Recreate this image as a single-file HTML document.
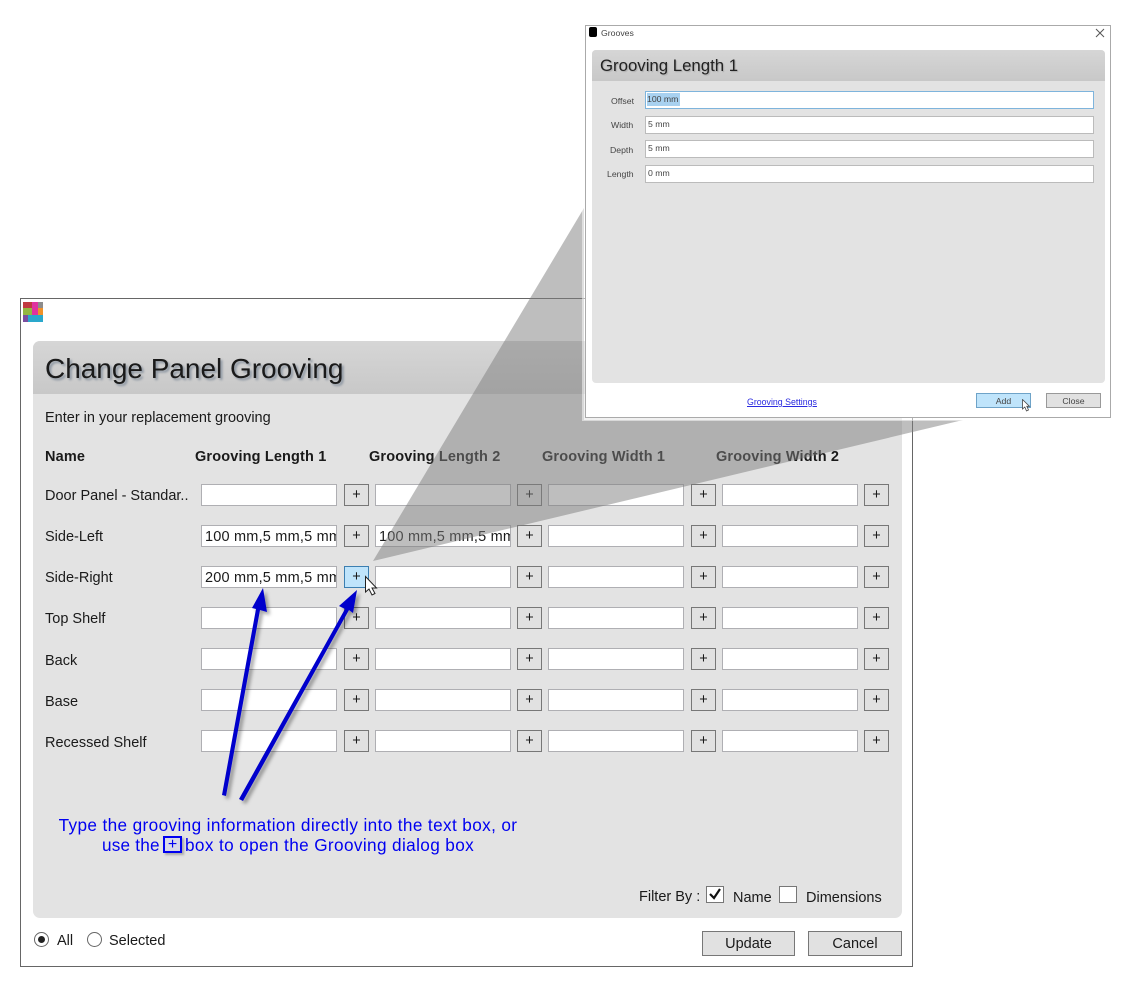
<!DOCTYPE html>
<html><head><meta charset="utf-8"><style>
html,body{margin:0;padding:0;background:#fff}
body{width:1133px;height:987px;position:relative;overflow:hidden;font-family:"Liberation Sans",sans-serif;color:#1a1a1a}
div,span{position:absolute;box-sizing:border-box;white-space:nowrap}
.i{background:#fff;border:1px solid #afafb3;width:136px;height:22px;font-size:14.5px;line-height:22px;padding-left:3px;overflow:hidden;letter-spacing:.2px}
.b{background:#e1e1e1;border:1px solid #777;width:25px;height:22px;font-size:14.5px;line-height:21px;text-align:center}
.l{left:45px;font-size:14.5px}
.h{top:448px;font-size:14.5px;font-weight:bold;letter-spacing:.15px;line-height:18px}
.s{font-size:8.7px;color:#444}
.g{left:645px;width:449px;height:18px;background:#fff;border:1px solid #bbb;font-size:8.7px;line-height:14px;padding-left:2px;color:#444}
.t{color:#0000f0;font-size:17.2px;line-height:20px;letter-spacing:.37px}
</style></head><body>
<div style="left:20px;top:298px;width:893px;height:669px;border:1px solid #666"></div>
<svg style="position:absolute;left:23px;top:302px" width="20" height="20"><rect x="0" y="0" width="9" height="6" fill="#c0393f"/><rect x="9" y="0" width="6" height="13" fill="#e0339f"/><rect x="15" y="0" width="5" height="6" fill="#8c8c8c"/><rect x="0" y="6" width="9" height="7" fill="#93b840"/><rect x="15" y="6" width="5" height="7" fill="#f0922a"/><rect x="0" y="13" width="5" height="7" fill="#7a4fa0"/><rect x="5" y="13" width="15" height="7" fill="#2aa8cc"/></svg>
<div style="left:33px;top:341px;width:869px;height:577px;background:#e3e3e3;border-radius:7px"></div>
<div style="left:33px;top:341px;width:869px;height:53px;background:linear-gradient(#d6d6d6,#c8c8c8);border-radius:7px 7px 0 0"></div>
<div style="left:45px;top:350px;font-size:28px;line-height:38px;font-weight:normal;text-shadow:2px 2px 2px #8a94a0;letter-spacing:-.02px">Change Panel Grooving</div>
<div style="left:45px;top:409px;font-size:14.5px;line-height:18px">Enter in your replacement grooving</div>
<div class="h" style="left:45px">Name</div>
<div class="h" style="left:195px">Grooving Length 1</div>
<div class="h" style="left:369px">Grooving Length 2</div>
<div class="h" style="left:542px">Grooving Width 1</div>
<div class="h" style="left:716px">Grooving Width 2</div>
<div class="l" style="top:487px;line-height:18px">Door Panel - Standar..</div>
<div class="l" style="top:528px;line-height:18px">Side-Left</div>
<div class="l" style="top:569px;line-height:18px">Side-Right</div>
<div class="l" style="top:610px;line-height:18px">Top Shelf</div>
<div class="l" style="top:652px;line-height:18px">Back</div>
<div class="l" style="top:693px;line-height:18px">Base</div>
<div class="l" style="top:734px;line-height:18px">Recessed Shelf</div>

<div class="i" style="left:201px;top:484px"></div><div class="b" style="left:344px;top:484px">+</div><div class="i" style="left:375px;top:484px"></div><div class="b" style="left:517px;top:484px">+</div><div class="i" style="left:548px;top:484px"></div><div class="b" style="left:691px;top:484px">+</div><div class="i" style="left:722px;top:484px"></div><div class="b" style="left:864px;top:484px">+</div>
<div class="i" style="left:201px;top:525px">100 mm,5 mm,5 mm</div><div class="b" style="left:344px;top:525px">+</div><div class="i" style="left:375px;top:525px">100 mm,5 mm,5 mm</div><div class="b" style="left:517px;top:525px">+</div><div class="i" style="left:548px;top:525px"></div><div class="b" style="left:691px;top:525px">+</div><div class="i" style="left:722px;top:525px"></div><div class="b" style="left:864px;top:525px">+</div>
<div class="i" style="left:201px;top:566px">200 mm,5 mm,5 mm</div><div class="b" style="left:344px;top:566px;background:#bfe4fb;border-color:#3c7fb1">+</div><div class="i" style="left:375px;top:566px"></div><div class="b" style="left:517px;top:566px">+</div><div class="i" style="left:548px;top:566px"></div><div class="b" style="left:691px;top:566px">+</div><div class="i" style="left:722px;top:566px"></div><div class="b" style="left:864px;top:566px">+</div>
<div class="i" style="left:201px;top:607px"></div><div class="b" style="left:344px;top:607px">+</div><div class="i" style="left:375px;top:607px"></div><div class="b" style="left:517px;top:607px">+</div><div class="i" style="left:548px;top:607px"></div><div class="b" style="left:691px;top:607px">+</div><div class="i" style="left:722px;top:607px"></div><div class="b" style="left:864px;top:607px">+</div>
<div class="i" style="left:201px;top:648px"></div><div class="b" style="left:344px;top:648px">+</div><div class="i" style="left:375px;top:648px"></div><div class="b" style="left:517px;top:648px">+</div><div class="i" style="left:548px;top:648px"></div><div class="b" style="left:691px;top:648px">+</div><div class="i" style="left:722px;top:648px"></div><div class="b" style="left:864px;top:648px">+</div>
<div class="i" style="left:201px;top:689px"></div><div class="b" style="left:344px;top:689px">+</div><div class="i" style="left:375px;top:689px"></div><div class="b" style="left:517px;top:689px">+</div><div class="i" style="left:548px;top:689px"></div><div class="b" style="left:691px;top:689px">+</div><div class="i" style="left:722px;top:689px"></div><div class="b" style="left:864px;top:689px">+</div>
<div class="i" style="left:201px;top:730px"></div><div class="b" style="left:344px;top:730px">+</div><div class="i" style="left:375px;top:730px"></div><div class="b" style="left:517px;top:730px">+</div><div class="i" style="left:548px;top:730px"></div><div class="b" style="left:691px;top:730px">+</div><div class="i" style="left:722px;top:730px"></div><div class="b" style="left:864px;top:730px">+</div>

<div class="t" style="left:40px;top:815px;width:496px;text-align:center">Type the grooving information directly into the text box, or</div>
<div class="t" style="left:102px;top:835px;letter-spacing:.2px">use the</div>
<div style="left:163px;top:836px;width:19px;height:17px;border:2px solid #0000f0;background:#d8d8e8;box-shadow:2px 2px 2px #aaa;color:#0000f0;font-size:16px;line-height:13px;text-align:center">+</div>
<div class="t" style="left:185px;top:835px">box to open the Grooving dialog box</div>

<div style="left:639px;top:888px;font-size:14.5px;line-height:18px">Filter By :</div>
<div style="left:706px;top:886px;width:18px;height:17px;background:#fff;border:1px solid #777"></div>
<svg style="position:absolute;left:706px;top:886px" width="18" height="17"><path d="M4 8 L8 12 L14 3" fill="none" stroke="#111" stroke-width="2.2"/></svg>
<div style="left:733px;top:889px;font-size:14.5px;line-height:18px">Name</div>
<div style="left:779px;top:886px;width:18px;height:17px;background:#fff;border:1px solid #777"></div>
<div style="left:806px;top:889px;font-size:14.5px;line-height:18px">Dimensions</div>

<svg style="position:absolute;left:33px;top:931px" width="18" height="18"><circle cx="8.500" cy="8.500" r="7" fill="#fff" stroke="#666"/><circle cx="8.500" cy="8.500" r="3.500" fill="#222"/></svg>
<div style="left:57px;top:932px;font-size:14.5px;line-height:18px">All</div>
<svg style="position:absolute;left:86px;top:931px" width="18" height="18"><circle cx="8.500" cy="8.500" r="7" fill="#fff" stroke="#666"/></svg>
<div style="left:109px;top:932px;font-size:14.5px;line-height:18px">Selected</div>
<div class="b" style="left:702px;top:931px;width:93px;height:25px;font-size:14.5px;line-height:25px">Update</div>
<div class="b" style="left:808px;top:931px;width:94px;height:25px;font-size:14.5px;line-height:25px">Cancel</div>

<svg style="position:absolute;left:0;top:0" width="1133" height="987"><polygon points="373,561 584,208 584,420 963,420" fill="rgb(125,125,125)" fill-opacity=".5"/>
<defs><filter id="sh" x="-30%" y="-10%" width="160%" height="120%"><feDropShadow dx="3" dy="3" stdDeviation="1.800" flood-color="#000" flood-opacity=".35"/></filter></defs>
<g filter="url(#sh)" fill="#0000cc"><polygon points="222,795 226,796 260,610 267,612 263,588 252,608 256,609"/><polygon points="239,799 243,801 349,610 353,613 357,590 339,606 345,609"/></g>
<g fill="#fff" stroke="#222" stroke-width="1"><path d="M365.500 576.500 V592 L369 589 L372 595 L375 593.500 L372 588 H376.500 Z"/></g></svg>

<div style="left:585px;top:25px;width:526px;height:393px;background:#fff;border:1px solid #aaa;box-shadow:0 0 0 3px rgba(255,255,255,.5)"></div>
<div style="left:589px;top:27px;width:8px;height:10px;background:#000;border-radius:2px"></div>
<div class="s" style="left:601px;top:27px;line-height:12px">Grooves</div>
<svg style="position:absolute;left:1095px;top:28px" width="10" height="10"><path d="M1 1 L9 9 M9 1 L1 9" stroke="#555" stroke-width="1"/></svg>
<div style="left:592px;top:50px;width:513px;height:333px;background:#e3e3e3;border-radius:4px"></div>
<div style="left:592px;top:50px;width:513px;height:31px;background:linear-gradient(#d6d6d6,#c8c8c8);border-radius:4px 4px 0 0"></div>
<div style="left:600px;top:55px;font-size:16.8px;line-height:22px;color:#222;text-shadow:1px 1px 1px #aaa">Grooving Length 1</div>
<div class="s" style="left:611px;top:95px;line-height:12px">Offset</div>
<div class="s" style="left:611px;top:119px;line-height:12px">Width</div>
<div class="s" style="left:610px;top:144px;line-height:12px">Depth</div>
<div class="s" style="left:607px;top:168px;line-height:12px">Length</div>
<div class="g" style="top:91px;border-color:#7eb4dc"><span style="left:1px;top:1px;background:#a8d1f0;width:33px;height:13px;line-height:13px">100 mm</span></div>
<div class="g" style="top:116px">5 mm</div>
<div class="g" style="top:140px">5 mm</div>
<div class="g" style="top:165px">0 mm</div>
<div style="left:747px;top:396px;font-size:8.800px;line-height:12px;color:#2a2ae0;text-decoration:underline">Grooving Settings</div>
<div style="left:976px;top:393px;width:55px;height:15px;background:#bfe4fb;border:1px solid #6ea3c8;font-size:8.700px;line-height:14px;text-align:center;color:#444">Add</div>
<div style="left:1046px;top:393px;width:55px;height:15px;background:#e1e1e1;border:1px solid #999;font-size:8.700px;line-height:14px;text-align:center;color:#444">Close</div>
<svg style="position:absolute;left:1021px;top:399px" width="12" height="15"><path d="M1.500 .5 V10 L3.800 8 L5.500 12 L7.500 11 L5.800 7.300 H8.500 Z" fill="#fff" stroke="#444" stroke-width=".8"/></svg>
</body></html>
